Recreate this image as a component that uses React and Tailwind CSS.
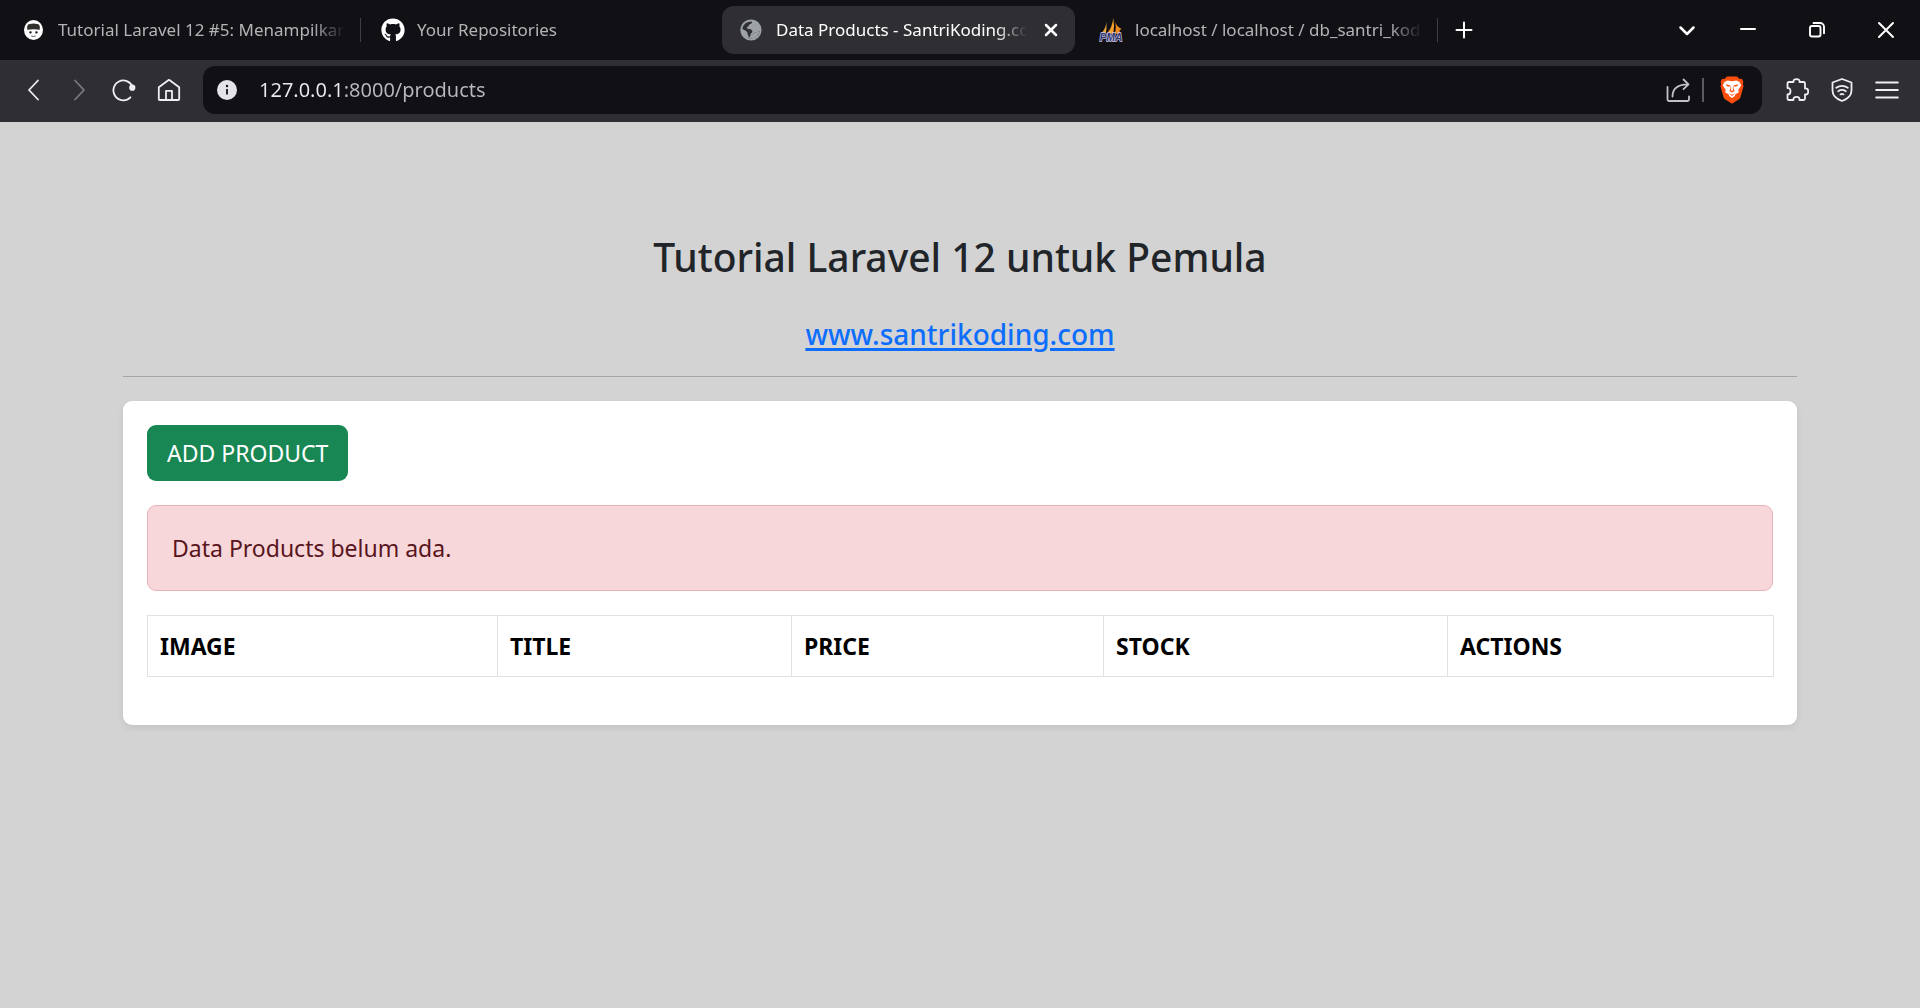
import { FaGithub } from 'react-icons/fa';

function Line({ children, className = 'size-6', width = 1.5 }) {
  return (
    <svg viewBox="0 0 24 24" className={className} fill="none" stroke="currentColor" strokeWidth={width} strokeLinecap="round" strokeLinejoin="round" aria-hidden="true">
      {children}
    </svg>
  );
}

function SantriIcon() {
  return (
    <svg viewBox="0 0 22 22" className="size-[22px]" aria-hidden="true">
      <ellipse cx="11.500" cy="11" rx="9.500" ry="10" fill="#fff" />
      <path d="M5.200 10.800V7.400Q5.500 5 7.900 5Q11.500 4.100 15.100 5Q17.500 5 17.800 7.400V10.800Q11.500 9.600 5.200 10.800Z" fill="#33312e" />
      <rect x="7.200" y="12.300" width="2.500" height="2.100" rx="1" fill="#222" />
      <rect x="13.200" y="12.300" width="2.500" height="2.100" rx="1" fill="#222" />
      <path d="M9.300 17Q11.500 18 13.700 17" fill="none" stroke="#555" strokeWidth="1" />
    </svg>
  );
}

function GlobeIcon() {
  return (
    <svg viewBox="0 0 22 22" className="size-[22px]" aria-hidden="true">
      <circle cx="11" cy="11" r="10.6" fill="#9da2a6" />
      <path d="M2.400 10.200C2.600 6 6.200 2.600 11.600 2.500C12.600 3.400 11.600 4.800 9.800 5.200C8.800 5.600 9.200 7 8 7.600C6.800 8 6.400 9.400 7.600 9.800C10.400 9.800 12.600 11 12.400 12.800C12.200 14 10.800 13.800 10.600 15.200C10.400 16.600 12.200 15.600 13.400 14.600C14.600 13.400 15.200 13.200 16.600 13.200C17.800 13.200 18.800 12.600 19.600 11.600C19.600 15.800 16 19.600 11 19.600C10 19.600 9.200 19.400 8.400 19.200C9 18.200 9 17.400 8 16C7.400 14.800 7.800 13.400 6.600 12.400C5.200 11.200 3.800 10.400 2.400 10.200Z" fill="#2f2e33" />
      <path d="M10.600 15.200C10.800 16.800 9.600 18 8.400 19.200C10.400 20 14 19.800 16.800 17.400C18.600 15.800 19.600 13.600 19.600 11.600C18.800 12.600 17.800 13.200 16.600 13.200C15.200 13.200 14.600 13.400 13.400 14.600C12.200 15.600 11.600 16 10.600 15.200Z" fill="#9da2a6" />
    </svg>
  );
}

function PmaIcon() {
  return (
    <svg viewBox="0 0 26 26" className="size-6" aria-hidden="true">
      <path d="M8 4Q7.500 12 2 17H7.500Q8.500 10 8 4Z" fill="#e8a33a" />
      <path d="M15.500 0Q14.500 10 8.500 17H15.500Q17 8 15.500 0Z" fill="#f6a02d" />
      <path d="M17 3Q19.500 10 17 17H25Q19.500 14 24.500 12Q18.500 9 17 3Z" fill="#f08a1c" />
      <text x="13" y="25" textAnchor="middle" fontFamily="Liberation Sans, sans-serif" fontWeight="700" fontStyle="italic" fontSize="11" fill="#34346e" stroke="#c9c9e4" strokeWidth="1.4" paintOrder="stroke">PMA</text>
    </svg>
  );
}

function BraveIcon() {
  return (
    <svg viewBox="0 0 24 28" className="h-7 w-6" aria-hidden="true">
      <path d="M7 0.500H17L19.500 3L21.800 2.800L23.500 6L22.800 8L23.500 10L20.500 21Q20 22.500 18.500 23.500L12 27.800L5.500 23.500Q4 22.500 3.500 21L0.500 10L1.200 8L0.500 6L2.200 2.800L4.500 3Z" fill="#fb4f0f" />
      <path d="M7.500 4.500L12 5.200L16.500 4.500L19.500 6L21.200 9.200L19.800 11.500L18.200 14L18.800 16.500L15.600 18L14.800 20L12 22L9.200 20L8.400 18L5.200 16.500L5.800 14L4.200 11.500L2.800 9.200L4.500 6Z" fill="#fff" />
      <path d="M5.500 8.300L10 9.300L9.600 10.800L7 10.300ZM18.500 8.300L14 9.300L14.400 10.800L17 10.300ZM10.800 8.500L10.400 12.800L9.400 15L12 16.400L14.600 15L13.600 12.800L13.200 8.500L12.800 12.600L13.200 14.200L12 14.900L10.800 14.200L11.200 12.600ZM8.600 17.200L12 18.800L15.400 17.200L12 19.900Z" fill="#fb4f0f" />
    </svg>
  );
}

const tabs = [
  { title: 'Tutorial Laravel 12 #5: Menampilkan', icon: <SantriIcon />, divider: true },
  { title: 'Your Repositories', icon: <FaGithub className="size-6 text-white" aria-hidden="true" /> },
  { title: 'Data Products - SantriKoding.com', icon: <GlobeIcon />, active: true },
  { title: 'localhost / localhost / db_santri_koding', icon: <PmaIcon />, divider: true },
];

function Tab({ title, icon, active, divider }) {
  return (
    <>
      <div className={`flex h-12 min-w-0 shrink basis-[353px] items-center rounded-xl pl-[18px] ${active ? 'bg-[#2f2e33] pr-3 text-white' : 'pr-3 text-[#b4b3b6]'}`}>
        <button type="button" className="flex min-w-0 flex-1 items-center text-left">
          <span className="flex w-9 shrink-0 items-center">{icon}</span>
          <span className="min-w-0 flex-1 overflow-hidden whitespace-nowrap text-[17px] leading-6 [mask-image:linear-gradient(to_right,black_calc(100%-32px),transparent)]">{title}</span>
        </button>
        {active && (
          <button type="button" aria-label="Close tab" className="ml-3 grid size-6 shrink-0 place-items-center">
            <Line className="size-5" width={3}><path d="M6 6l12 12M18 6l-12 12" /></Line>
          </button>
        )}
      </div>
      <span className="flex w-1.5 shrink-0 justify-center">{divider && <span className="h-6 w-px bg-[#3f3e43]" />}</span>
    </>
  );
}

function TabStrip() {
  return (
    <div className="flex h-[60px] items-center bg-[#111015] pl-1 text-white">
      {tabs.map((t) => <Tab key={t.title} {...t} />)}
      <button type="button" aria-label="New tab" className="ml-2.5 grid size-7 shrink-0 place-items-center">
        <Line width={2}><path d="M12 4.500v15M4.500 12h15" /></Line>
      </button>
      <div className="ml-auto flex shrink-0 items-center">
        <button type="button" aria-label="Search tabs" className="grid h-12 w-[52px] place-items-center"><Line width={2.5}><path d="M5.500 9.500l6.500 6.500 6.500-6.500" /></Line></button>
        <button type="button" aria-label="Minimize" className="grid h-12 w-[69px] place-items-center"><Line width={2}><path d="M5 11h14" /></Line></button>
        <button type="button" aria-label="Restore" className="grid h-12 w-[69px] place-items-center">
          <Line width={1.9}><rect x="5" y="8" width="10.500" height="10.500" rx="2" /><path d="M8.500 5h6.500a4 4 0 0 1 4 4v6.300" /></Line>
        </button>
        <button type="button" aria-label="Close" className="grid h-12 w-[69px] place-items-center"><Line width={2}><path d="M5 5l14 14M19 5L5 19" /></Line></button>
      </div>
    </div>
  );
}

function ToolButton({ label, children, className = 'text-[#efeef2]' }) {
  return <button type="button" aria-label={label} className={`grid h-12 w-[45px] place-items-center ${className}`}>{children}</button>;
}

function Toolbar() {
  return (
    <div className="flex h-[62px] items-center gap-3 bg-[#2f2e33] px-[11px] pb-0.5">
      <div className="flex">
        <ToolButton label="Back"><Line width={1.8}><path d="M16 2.500L7 12l9 9.500" /></Line></ToolButton>
        <ToolButton label="Forward" className="text-[#7b7a7f]"><Line width={1.8}><path d="M8 2.500l9 9.500-9 9.500" /></Line></ToolButton>
        <ToolButton label="Reload">
          <Line width={1.8}><path d="M20.600 9A9.900 9.900 0 1 0 18.400 19.300" /><circle cx="20.300" cy="9.700" r="2.200" fill="currentColor" /></Line>
        </ToolButton>
        <ToolButton label="Home">
          <Line width={1.8}><path d="M1.800 9.200L12 1.800l10.200 7.400V21a1 1 0 0 1-1 1H2.800a1 1 0 0 1-1-1zM9 22v-9.200h6V22" /></Line>
        </ToolButton>
      </div>
      <div className="flex h-12 min-w-0 flex-1 items-center rounded-xl bg-[#111015] pl-3.5 pr-[18px]">
        <button type="button" aria-label="Site information" className="shrink-0">
          <svg viewBox="0 0 20 20" className="size-5" aria-hidden="true">
            <circle cx="10" cy="10" r="10" fill="#e4e3e8" />
            <circle cx="10" cy="6" r="1.2" fill="#111015" />
            <path d="M10 9v5.500" stroke="#111015" strokeWidth="1.8" />
          </svg>
        </button>
        <input aria-label="Address" defaultValue="127.0.0.1:8000/products" className="ml-[22px] min-w-0 flex-1 bg-[linear-gradient(to_right,#ececf0_86px,#b9b8bd_86px)] bg-clip-text text-xl leading-7 text-transparent outline-none" />
        <div className="flex shrink-0 items-center">
          <button type="button" aria-label="Share" className="text-[#c3c2c6]">
            <Line width={1.8}><path d="M1.500 9v12.500a1.500 1.500 0 0 0 1.500 1.500h18.500a1.500 1.500 0 0 0 1.500-1.500V18.500M6.500 18.500C6.500 11 10.500 6.500 21.500 6.300M17.500 1.500l5 4.800-5 4.800" /></Line>
          </button>
          <span className="mx-3 h-6 w-0.5 bg-[#5b5a5f]" />
          <button type="button" aria-label="Brave Shields" className="ml-1"><BraveIcon /></button>
        </div>
      </div>
      <div className="flex">
        <ToolButton label="Extensions">
          <Line width={1.8}><path d="M2.500 5.500Q2.500 4 4 4H8.500Q8 1.200 11.500 1.200T14.500 4H18.500Q20 4 20 5.500V10.500Q23.200 10 23.200 13.500T20 16.500V20.500Q20 22 18.500 22H14.500Q14.800 18.800 11.500 18.800T8.500 22H4Q2.500 22 2.500 20.500V16.500Q5.500 16.500 5.500 13.200T2.500 10Z" /></Line>
        </ToolButton>
        <ToolButton label="VPN">
          <Line width={1.8}><path d="M12 1L21.500 4.500V12.500C21.500 18 17.500 21 12 23C6.500 21 2.500 18 2.500 12.500V4.500ZM6.200 9.800Q12 5.800 17.800 9.800M8.200 13.200Q12 10.600 15.800 13.200" /><path d="M10.500 16.400Q12 15.400 13.500 16.400" /></Line>
        </ToolButton>
        <ToolButton label="Menu"><Line width={2}><path d="M1.200 4.500h21.600M1.200 12h21.600M1.200 19.500h21.600" /></Line></ToolButton>
      </div>
    </div>
  );
}

const columns = [
  ['IMAGE', 'w-[350px]'],
  ['TITLE', 'w-[294px]'],
  ['PRICE', 'w-[312px]'],
  ['STOCK', 'w-[344px]'],
  ['ACTIONS', 'w-[326px]'],
];

export default function App() {
  return (
    <div className="flex min-h-screen flex-col bg-[lightgray] font-['Noto_Sans','Open_Sans',sans-serif]">
      <header>
        <TabStrip />
        <Toolbar />
      </header>
      <main className="mx-auto w-full max-w-[1722px] px-6 pt-[110px]">
        <h3 className="text-center text-[39px] font-medium leading-[50px] text-[#212529]">Tutorial Laravel 12 untuk Pemula</h3>
        <h5 className="mt-[34px] text-center text-[28px] font-medium leading-9">
          <a href="https://www.santrikoding.com" className="text-[#0d6efd] underline decoration-[3px] underline-offset-[3px]">www.santrikoding.com</a>
        </h5>
        <hr className="mt-6 border-[#a5a6a7]" />
        <section className="mt-6 rounded-[9px] bg-white px-6 pb-12 pt-6 text-[23px] shadow-[0_3px_6px_rgba(0,0,0,0.075)]">
          <a href="#add-product" className="inline-flex h-14 items-center rounded-[9px] bg-[#198754] px-5 leading-9 text-white">ADD PRODUCT</a>
          <div role="alert" className="mt-6 rounded-[9px] border border-[#e6b5bb] bg-[#f8d7da] p-6 leading-9 text-[#58151c]">Data Products belum ada.</div>
          <table className="mt-6 w-full table-fixed border-collapse text-black">
            <thead>
              <tr>
                {columns.map(([name, width]) => (
                  <th key={name} scope="col" className={`border border-[#dee2e6] px-3 py-3 text-left font-bold leading-9 ${width}`}>{name}</th>
                ))}
              </tr>
            </thead>
          </table>
        </section>
      </main>
    </div>
  );
}
